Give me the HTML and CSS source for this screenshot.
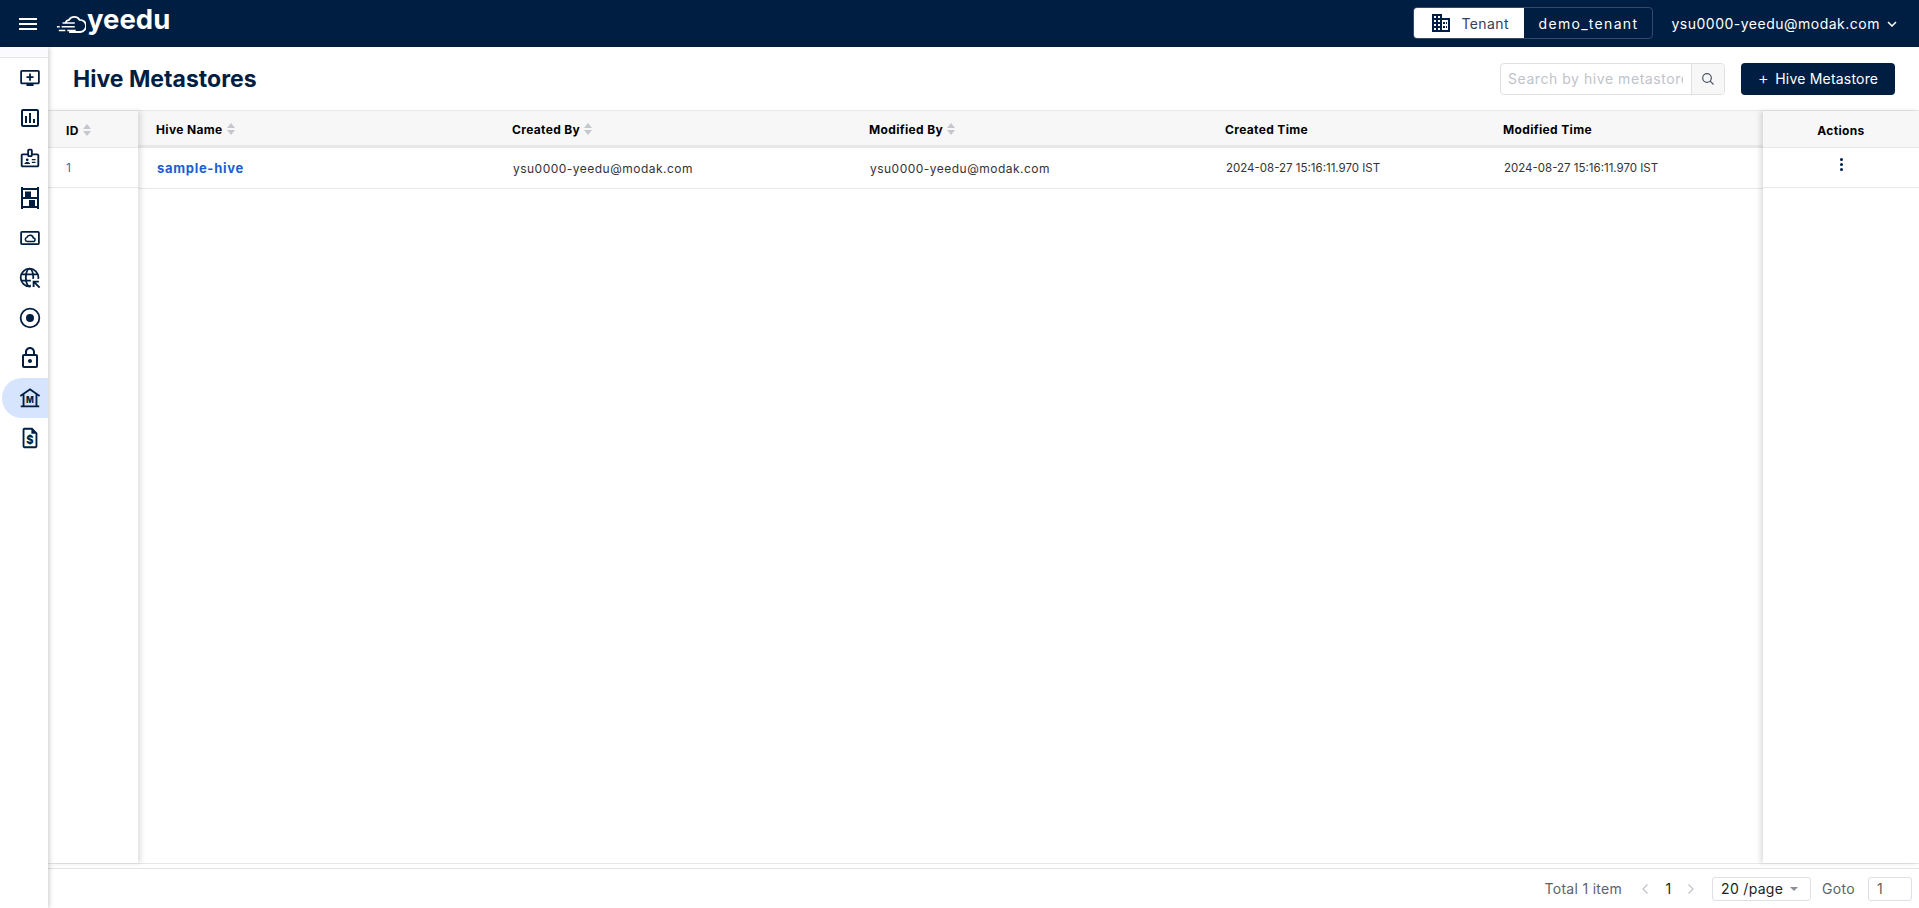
FILE: index.html
```html
<!DOCTYPE html>
<html lang="en">
<head>
  <meta charset="UTF-8">
  <meta name="viewport" content="width=device-width, initial-scale=1.0">
  <title>Hive Metastores</title>
  <link rel="stylesheet" href="styles.css">
</head>
<body>
  <header class="topbar">
    <div class="hamburger"><span></span><span></span><span></span></div>
    <div class="logo">
      <svg class="logo-cloud" viewBox="0 0 32 20" width="30" height="19">
        <path d="M10 8.500 A5 5 0 0 1 14 5 A6.500 6.500 0 0 1 25 5 A5.800 5.800 0 0 1 26 18 H14" fill="none" stroke="#fff" stroke-width="1.900"/>
        <path d="M7 8.500h13M1 12.500h3M6 12.500h14M3 16.500h7M12 16.500h9" fill="none" stroke="#fff" stroke-width="1.600"/>
      </svg>
      <span class="logo-text">yeedu</span>
    </div>
    <div class="tenant">
      <div class="tenant-label">
        <svg viewBox="0 0 20 18" width="20" height="18">
          <path d="M1 0h10v4h8v14H1z" fill="#001e42"/>
          <path d="M3 2h2v2H3zM7 2h2v2H7zM3 6h2v2H3zM7 6h2v2H7zM3 10h2v2H3zM7 10h2v2H7zM3 14h2v2H3zM7 14h2v2H7zM11 6h6v10h-6z" fill="#fff"/>
          <path d="M12 8h2v2h-2zM12 12h2v2h-2zM15 8h1v2h-1zM15 12h1v2h-1z" fill="#001e42"/>
        </svg>
        <span>Tenant</span>
      </div>
      <div class="tenant-value">demo_tenant</div>
    </div>
    <div class="user">
      <span>ysu0000-yeedu@modak.com</span>
      <svg viewBox="0 0 10 6" width="10" height="6"><path d="M1 1l4 4 4-4" fill="none" stroke="#fff" stroke-width="1.500"/></svg>
    </div>
  </header>

  <div class="layout">
    <nav class="sidebar">
      <div class="side-sep"></div>
      <a class="side-item">
        <svg viewBox="-1.500 -1.500 27 27"><path d="M21 3H3c-1.110 0-2 .89-2 2v12c0 1.100.89 2 2 2h5v2h8v-2h5c1.100 0 1.990-.9 1.990-2L23 5c0-1.110-.9-2-2-2zm0 14H3V5h18v12zm-5-7v2h-3v3h-2v-3H8v-2h3V7h2v3h3z"/></svg>
      </a>
      <a class="side-item">
        <svg viewBox="0 0 24 24"><path d="M19 3H5c-1.100 0-2 .9-2 2v14c0 1.100.9 2 2 2h14c1.100 0 2-.9 2-2V5c0-1.100-.9-2-2-2zm0 16H5V5h14v14zM7 10h2v7H7zM11 7h2v10h-2zM15 13h2v4h-2z"/></svg>
      </a>
      <a class="side-item">
        <svg viewBox="-1 -1 26 26"><path d="M20 7h-5V4c0-1.100-.9-2-2-2h-2c-1.100 0-2 .9-2 2v3H4c-1.100 0-2 .9-2 2v11c0 1.100.9 2 2 2h16c1.100 0 2-.9 2-2V9c0-1.100-.9-2-2-2zM11 4h2v5h-2V4zm9 16H4V9h5c0 1.100.9 2 2 2h2c1.100 0 2-.9 2-2h5v11zM9 15.500a1.500 1.500 0 1 0 0-3 1.500 1.500 0 0 0 0 3zM12 18c0-1.100-1.800-1.800-3-1.800S6 16.900 6 18v.5h6V18zM14 13h4v1.500h-4zM14 16h4v1.500h-4z"/></svg>
      </a>
      <a class="side-item">
        <svg viewBox="0 0 24 24"><path d="M3 1h2v1h14V1h2v22h-2v-1H5v1H3V1zm2 3v7h14V4H5zm0 9v7h14v-7H5zM7 5.500h6V11H7zM11 14h6v6h-6z"/></svg>
      </a>
      <a class="side-item">
        <svg class="line" viewBox="-1.500 -1.500 27 27"><rect x="2" y="5" width="20" height="14" rx="1"/><path d="M9 16h6.500a2 2 0 0 0 .3-4 3.800 3.800 0 0 0-7.300-.7A2.400 2.400 0 0 0 9 16z" stroke-width="1.700"/></svg>
      </a>
      <a class="side-item">
        <svg class="line" viewBox="-1.500 -1.500 27 27"><circle cx="11.500" cy="11.500" r="10"/><ellipse cx="11.500" cy="11.500" rx="4.200" ry="10"/><path d="M2 8h19M2 15h19"/><path d="M13 13h12v12H13z" class="knock"/><path d="M15 15h7v2h-3.400l5 5-1.500 1.500-5-5V22H15z" class="solid"/></svg>
      </a>
      <a class="side-item">
        <svg class="line" viewBox="-1.500 -1.500 27 27"><circle cx="12" cy="12" r="10.500"/><circle cx="12" cy="12" r="4.500" class="solid"/></svg>
      </a>
      <a class="side-item">
        <svg viewBox="0 0 24 24"><path d="M18 8h-1V6c0-2.760-2.240-5-5-5S7 3.240 7 6v2H6c-1.100 0-2 .9-2 2v10c0 1.100.9 2 2 2h12c1.100 0 2-.9 2-2V10c0-1.100-.9-2-2-2zM9 6c0-1.660 1.340-3 3-3s3 1.340 3 3v2H9V6zm9 14H6V10h12v10zm-6-3c1.100 0 2-.9 2-2s-.9-2-2-2-2 .9-2 2 .9 2 2 2z"/></svg>
      </a>
      <a class="side-item active">
        <svg viewBox="-1 -1 26 26">
          <path d="M12 1.500 23 9l-1.100 1.600L20 9.300V20h2v2H2v-2h2V9.300l-1.900 1.300L1 9zM6 8v12h12V8l-6-4.100z"/>
          <text class="side-m" x="12" y="17.500">M</text>
        </svg>
      </a>
      <a class="side-item">
        <svg viewBox="-1 -1 26 26">
          <path d="M6 1h8.500L20 6.500V21c0 1.100-.9 2-2 2H6c-1.100 0-2-.9-2-2V3c0-1.100.9-2 2-2zm0 2v18h12V7.500h-4.500V3z"/>
          <text class="side-dollar" x="12" y="18.500">$</text>
        </svg>
      </a>
    </nav>

    <main class="main">
      <div class="title-row">
        <h1>Hive Metastores</h1>
        <div class="search">
          <input class="search-input" type="text" placeholder="Search by hive metastore">
          <div class="search-btn">
            <svg viewBox="0 0 14 14" width="14" height="14"><circle cx="6" cy="6" r="4.300" fill="none" stroke="#4a5568" stroke-width="1.200"/><path d="M9.200 9.200l3.300 3.300" stroke="#4a5568" stroke-width="1.200"/></svg>
          </div>
        </div>
        <button class="add-btn"><span class="plus">+</span> Hive Metastore</button>
      </div>

      <div class="table">
        <div class="col-fixed col-id">
          <div class="th">ID <i class="sort"></i></div>
          <div class="td link-id">1</div>
        </div>
        <div class="col-middle">
          <div class="row head">
            <div class="th">Hive Name <i class="sort"></i></div>
            <div class="th">Created By <i class="sort"></i></div>
            <div class="th">Modified By <i class="sort"></i></div>
            <div class="th">Created Time</div>
            <div class="th">Modified Time</div>
          </div>
          <div class="row body">
            <div class="td name">sample-hive</div>
            <div class="td">ysu0000-yeedu@modak.com</div>
            <div class="td">ysu0000-yeedu@modak.com</div>
            <div class="td time">2024-08-27 15:16:11.970 IST</div>
            <div class="td time">2024-08-27 15:16:11.970 IST</div>
          </div>
        </div>
        <div class="col-fixed col-actions">
          <div class="th">Actions</div>
          <div class="td"><span class="dots"><i></i><i></i><i></i></span></div>
        </div>
      </div>

      <footer class="pager">
        <span class="total">Total 1 item</span>
        <svg class="arrow" viewBox="0 0 8 12" width="8" height="12"><path d="M6.500 1.500 2 6l4.500 4.500" fill="none" stroke="#c0c4cc" stroke-width="1.300"/></svg>
        <span class="page-num">1</span>
        <svg class="arrow" viewBox="0 0 8 12" width="8" height="12"><path d="M1.500 1.500 6 6l-4.500 4.500" fill="none" stroke="#c0c4cc" stroke-width="1.300"/></svg>
        <div class="page-size">20 /page <i class="caret"></i></div>
        <span class="goto">Goto</span>
        <div class="goto-input">1</div>
      </footer>
    </main>
  </div>
</body>
</html>
```

FILE: styles.css
```css
* {
  box-sizing: border-box;
}
html, body {
  margin: 0;
  height: 100%;
  overflow: hidden;
}
body {
  font-family: Inter, 'Noto Sans', sans-serif;
  color: #111;
  background: #fff;
  display: flex;
  flex-direction: column;
}

/* top bar */
.topbar {
  height: 47px;
  flex: none;
  background: #001e42;
  color: #fff;
  display: flex;
  align-items: center;
  padding: 0 22px 0 19px;
}
.hamburger {
  width: 18px;
  display: flex;
  flex-direction: column;
  gap: 3px;
}
.hamburger span {
  height: 2px;
  background: #fff;
}
.logo {
  display: flex;
  align-items: center;
  margin-left: 19px;
  margin-right: auto;
}
.logo-text {
  font-size: 27.5px;
  font-weight: 700;
  line-height: 1;
  margin-left: 1px;
  margin-top: -7px;
}
.logo-cloud {
  margin-top: 1px;
}
.tenant {
  width: 240px;
  height: 32px;
  display: flex;
  border: 1px solid #33496a;
  border-radius: 4px;
  font-size: 14px;
  letter-spacing: 0.4px;
  margin-top: -1px;
}
.tenant-label {
  width: 110px;
  background: #fff;
  color: #33415c;
  border-radius: 3px 0 0 3px;
  display: flex;
  align-items: center;
  gap: 10px;
  padding-left: 17px;
}
.tenant-value {
  flex: 1;
  display: flex;
  align-items: center;
  justify-content: center;
  letter-spacing: 1.3px;
}
.user {
  display: flex;
  align-items: center;
  gap: 7px;
  margin-left: 18px;
  font-size: 14px;
  letter-spacing: 0.5px;
}

/* sidebar */
.layout {
  flex: 1;
  display: flex;
  min-height: 0;
}
.sidebar {
  width: 48px;
  flex: none;
  background: #fff;
  box-shadow: 1px 0 5px rgba(0, 0, 0, 0.22);
  position: relative;
  z-index: 2;
  display: flex;
  flex-direction: column;
  align-items: flex-end;
}
.side-sep {
  width: 100%;
  height: 11px;
  background: #fafaff;
  border-bottom: 1px solid #e4e4e4;
  flex: none;
}
.side-item {
  width: 46px;
  height: 40px;
  flex: none;
  display: flex;
  align-items: center;
  padding-left: 16px;
}
.side-item svg {
  width: 24px;
  height: 24px;
  fill: #001e42;
}
.side-item svg.line {
  fill: none;
  stroke: #001e42;
  stroke-width: 2;
}
.side-item svg .solid {
  fill: #001e42;
  stroke: none;
}
.side-item svg .knock {
  fill: #fff;
  stroke: none;
}
.side-item.active {
  background: #d6e4fd;
  border-radius: 20px 0 0 20px;
}
.side-m {
  font-family: Inter, sans-serif;
  font-size: 9px;
  font-weight: 800;
  text-anchor: middle;
}
.side-dollar {
  font-family: Inter, sans-serif;
  font-size: 12px;
  font-weight: 800;
  text-anchor: middle;
}

/* title row */
.main {
  flex: 1;
  min-width: 0;
  display: flex;
  flex-direction: column;
}
.title-row {
  height: 63px;
  flex: none;
  display: flex;
  align-items: center;
  padding: 0 24px 0 25px;
}
.title-row h1 {
  margin: 0 auto 0 0;
  font-size: 23px;
  font-weight: 700;
  color: #001e42;
}
.search {
  width: 225px;
  height: 32px;
  display: flex;
  border: 1px solid #e0e0e0;
  border-radius: 4px;
}
.search-input {
  flex: 1;
  min-width: 0;
  margin: 0 8px 0 7px;
  padding: 0;
  border: 0;
  outline: 0;
  background: none;
  font-family: inherit;
  font-size: 14px;
  letter-spacing: 0.55px;
}
.search-input::placeholder {
  color: #bfc3cb;
  opacity: 1;
}
.search-btn {
  width: 33px;
  flex: none;
  background: #f7f7f7;
  border-left: 1px solid #e0e0e0;
  border-radius: 0 3px 3px 0;
  display: flex;
  align-items: center;
  justify-content: center;
}
.add-btn {
  width: 154px;
  height: 32px;
  margin-left: 16px;
  background: #001e42;
  color: #fff;
  border: 0;
  border-radius: 4px;
  font-family: inherit;
  font-size: 14px;
  letter-spacing: 0.2px;
}
.plus {
  font-size: 17px;
  font-weight: 300;
  line-height: 1;
  margin-right: 2px;
}

/* table */
.table {
  flex: 1;
  min-height: 0;
  display: flex;
  border-top: 1px solid #e8e8e8;
  border-bottom: 1px solid #e8e8e8;
  margin-bottom: 4px;
}
.th {
  height: 36px;
  padding-top: 2px;
  background: #f7f7f7;
  font-size: 12px;
  font-weight: 700;
  letter-spacing: 0.35px;
  color: #000;
  display: flex;
  align-items: center;
  gap: 3px;
  white-space: nowrap;
}
.td {
  font-size: 12px;
  letter-spacing: 0.48px;
  color: #333;
  display: flex;
  align-items: center;
  white-space: nowrap;
}
.col-fixed {
  flex: none;
  position: relative;
  z-index: 1;
  background: #fff;
}
.col-id {
  width: 90px;
  box-shadow: 3px 0 5px rgba(0, 0, 0, 0.12);
}
.col-actions {
  width: 156px;
  box-shadow: -3px 0 5px rgba(0, 0, 0, 0.12);
}
.col-fixed .th {
  border-bottom: 1px solid #e8e8e8;
  height: 37px;
}
.col-fixed .td {
  height: 40px;
  border-bottom: 1px solid #e8e8e8;
}
.col-id .th,
.col-id .td {
  padding-left: 18px;
}
.col-actions .th,
.col-actions .td {
  justify-content: center;
}
.col-actions .td {
  padding-bottom: 6px;
}
.link-id {
  color: #1a73b8;
}
.col-middle {
  flex: 1;
  min-width: 0;
}
.row {
  display: grid;
  grid-template-columns: 356px 357px 356px 278px 278px;
}
.row.head {
  height: 37px;
  border-bottom: 3px solid #e8e8e8;
  background: #f7f7f7;
}
.row.head .th {
  height: 34px;
  padding-left: 18px;
}
.row.body {
  height: 41px;
  border-bottom: 1px solid #e8e8e8;
}
.row.body .td {
  padding-left: 19px;
}
.sort {
  width: 9px;
  height: 12px;
  flex: none;
  position: relative;
  margin-left: 1px;
}
.sort::before,
.sort::after {
  content: '';
  position: absolute;
  left: 0;
  border-left: 4.5px solid transparent;
  border-right: 4.5px solid transparent;
}
.sort::before {
  top: 0;
  border-bottom: 5px solid #c4c7cd;
}
.sort::after {
  bottom: 0;
  border-top: 5px solid #c4c7cd;
}
.row.body .name {
  color: #1a5fd0;
  font-weight: 700;
  font-size: 13px;
  letter-spacing: 0.7px;
}
.row.body .time {
  color: #333;
  font-size: 11.5px;
  letter-spacing: 0;
}
.dots {
  display: flex;
  flex-direction: column;
  gap: 2px;
}
.dots i {
  width: 3px;
  height: 3px;
  border-radius: 50%;
  background: #001e42;
}

/* pagination */
.pager {
  height: 40px;
  flex: none;
  border-top: 1px solid #e4e4e4;
  display: flex;
  align-items: center;
  justify-content: flex-end;
  padding-right: 7px;
  font-size: 14px;
  letter-spacing: 0.3px;
  color: #606266;
}
.total {
  margin-right: 19px;
}
.page-num {
  color: #222;
  margin: 0 15.5px 0 16.5px;
}
.page-size {
  width: 99px;
  height: 24px;
  margin-left: 17px;
  border: 1px solid #dcdfe6;
  border-radius: 3px;
  color: #222;
  display: flex;
  align-items: center;
  justify-content: space-between;
  padding: 0 12px 0 8px;
}
.caret {
  border-left: 4px solid transparent;
  border-right: 4px solid transparent;
  border-top: 4px solid #8a8f99;
}
.goto {
  margin-left: 11px;
}
.goto-input {
  width: 44px;
  height: 24px;
  margin-left: 13px;
  border: 1px solid #dcdfe6;
  border-radius: 3px;
  padding-left: 8px;
  line-height: 22px;
}
```
